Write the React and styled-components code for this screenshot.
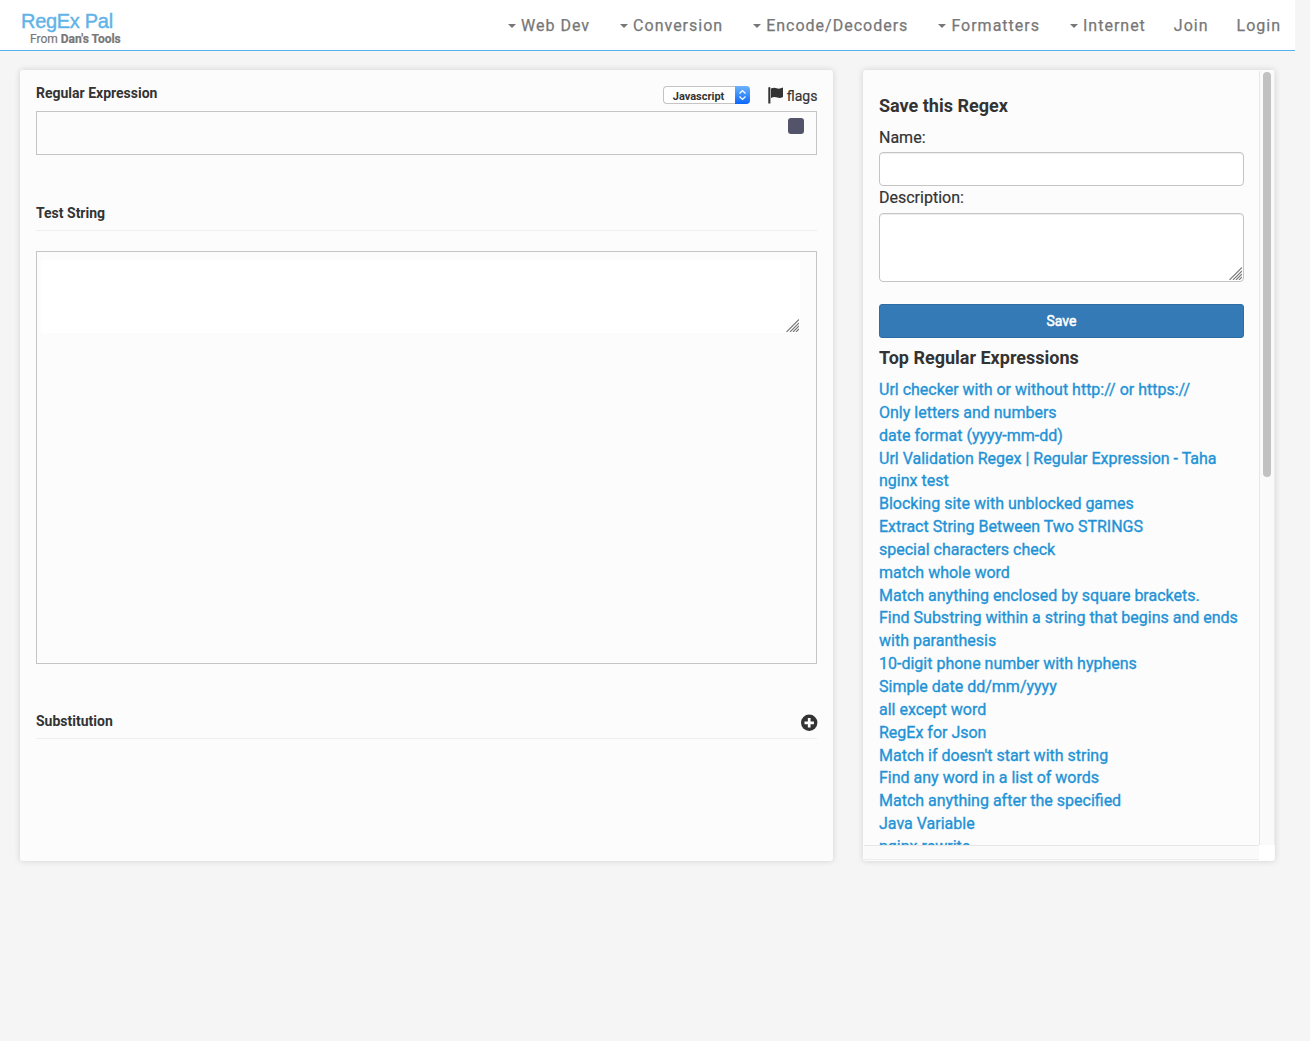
import styled, { createGlobalStyle } from 'styled-components';

const menus = [
  { name: 'Web Dev', caret: true },
  { name: 'Conversion', caret: true },
  { name: 'Encode/Decoders', caret: true },
  { name: 'Formatters', caret: true },
  { name: 'Internet', caret: true },
  { name: 'Join' },
  { name: 'Login' }
];

const expressions = [
  'Url checker with or without http:// or https://',
  'Only letters and numbers',
  'date format (yyyy-mm-dd)',
  'Url Validation Regex | Regular Expression - Taha',
  'nginx test',
  'Blocking site with unblocked games',
  'Extract String Between Two STRINGS',
  'special characters check',
  'match whole word',
  'Match anything enclosed by square brackets.',
  'Find Substring within a string that begins and ends with paranthesis',
  '10-digit phone number with hyphens',
  'Simple date dd/mm/yyyy',
  'all except word',
  'RegEx for Json',
  "Match if doesn't start with string",
  'Find any word in a list of words',
  'Match anything after the specified',
  'Java Variable',
  'nginx rewrite'
];

const ResizeGrip = () => (
  <StGrip viewBox="0 0 13 13">
    <path d="M0.5 13 13 0.5M4 13 13 4M7 13 13 7M10 13 13 10" stroke="#777" strokeWidth="1.1" />
  </StGrip>
);

const Header = () => {
  return (
    <StHeader>
      <StBrand>
        <StLogo>RegEx Pal</StLogo>
        <StFrom>
          From <b>Dan's Tools</b>
        </StFrom>
      </StBrand>
      <StNav>
        {menus.map((menu) => (
          <StNavItem key={menu.name} href="#">
            {menu.caret && <StCaret />}
            {menu.name}
          </StNavItem>
        ))}
      </StNav>
    </StHeader>
  );
};

const Editor = () => {
  return (
    <StEditor>
      <StEditorTop>
        <StLabel>Regular Expression</StLabel>
        <StOptions>
          <StSelect>
            <StSelectText>Javascript</StSelectText>
            <StSelectArrow>
              <svg width="9" height="12" viewBox="0 0 9 12" fill="none" stroke="#fff" strokeWidth="1.3">
                <path d="M1.5 4.4 4.5 1.6 7.5 4.4M1.5 7.6 4.5 10.4 7.5 7.6" />
              </svg>
            </StSelectArrow>
          </StSelect>
          <StFlags>
            <svg width="15" height="18" viewBox="0 0 15 18" fill="#333">
              <path d="M0.3 1.6Q1.3 0.4 2.4 1.6V17.6H0.3ZM3 2.5Q6 1 8.7 2.2Q11 3.4 15 1.5V10.9Q12 12.6 9.4 11.5Q6 10.1 3 12Z" />
            </svg>
            flags
          </StFlags>
        </StOptions>
      </StEditorTop>
      <StRegexBox>
        <StMarker />
      </StRegexBox>
      <StTestHead>
        <StLabel>Test String</StLabel>
      </StTestHead>
      <StTestBox>
        <StTestArea>
          <ResizeGrip />
        </StTestArea>
      </StTestBox>
      <StSubHead>
        <StLabel>Substitution</StLabel>
        <svg width="17" height="17" viewBox="0 0 17 17">
          <circle cx="8.2" cy="8.8" r="8.2" fill="#333" />
          <path d="M8.2 4.1v9.4M3.5 8.8h9.4" stroke="#fff" strokeWidth="2.7" />
        </svg>
      </StSubHead>
    </StEditor>
  );
};

const Sidebar = () => {
  return (
    <StSidebar>
      <StContent>
        <StTitle>Save this Regex</StTitle>
        <StFieldName>Name:</StFieldName>
        <StInput />
        <StFieldName $tall>Description:</StFieldName>
        <StDescription>
          <ResizeGrip />
        </StDescription>
        <StSave>Save</StSave>
        <StTopTitle>Top Regular Expressions</StTopTitle>
        <StList>
          {expressions.map((text) => (
            <li key={text}>
              <a href="#">{text}</a>
            </li>
          ))}
        </StList>
      </StContent>
      <StTrackY>
        <StThumb />
      </StTrackY>
      <StTrackX />
      <StCorner />
    </StSidebar>
  );
};

const App = () => {
  return (
    <>
      <GlobalStyle />
      <Header />
      <StMain>
        <Editor />
        <Sidebar />
      </StMain>
    </>
  );
};

const GlobalStyle = createGlobalStyle`
  * {
    box-sizing: border-box;
  }
  body {
    margin: 0;
    min-height: 1041px;
    background: #f5f5f5;
    color: #333;
    font-family: Roboto, sans-serif;
    font-size: 16px;
    line-height: 1.42857;
    overflow: hidden;
  }
  a {
    text-decoration: none;
  }
`;

const StHeader = styled.header`
  width: 1295px;
  height: 51px;
  display: flex;
  justify-content: space-between;
  padding-left: 21px;
  background: #fff;
  border-bottom: 1px solid #54b4eb;
`;

const StBrand = styled.div`
  display: flex;
  flex-direction: column;
  padding-top: 10px;
`;

const StLogo = styled.span`
  font-family: 'Liberation Sans', sans-serif;
  font-size: 20px;
  line-height: 22px;
  letter-spacing: -0.3px;
  color: #5fb3e6;
  -webkit-text-stroke: 0.4px #5fb3e6;
`;

const StFrom = styled.span`
  margin-left: 9px;
  font-size: 12px;
  line-height: 14px;
  color: #777;
  -webkit-text-stroke: 0.2px #777;
`;

const StNav = styled.nav`
  display: flex;
  align-items: center;
  padding-top: 2px;
`;

const StNavItem = styled.a`
  display: flex;
  align-items: center;
  padding: 0 14px;
  font-size: 16px;
  letter-spacing: 1px;
  color: #777;
  -webkit-text-stroke: 0.25px #777;
`;

const StCaret = styled.i`
  margin: 0 5px 0 2px;
  border-top: 4px solid;
  border-left: 4px solid transparent;
  border-right: 4px solid transparent;
`;

const StMain = styled.main`
  display: flex;
  gap: 30px;
  padding: 19px 20px 0;
`;

const StCard = styled.section`
  height: 791px;
  background: #fcfcfc;
  border-radius: 3px;
  box-shadow: 0 0 6px rgba(0, 0, 0, 0.15);
`;

const StEditor = styled(StCard)`
  width: 813px;
  padding: 13px 16px 0;
`;

const StEditorTop = styled.div`
  height: 28px;
  display: flex;
  justify-content: space-between;
`;

const StLabel = styled.span`
  font-size: 14px;
  font-weight: 700;
  line-height: 20px;
`;

const StOptions = styled.div`
  display: flex;
  align-items: flex-start;
  gap: 18px;
  padding-top: 3px;
`;

const StSelect = styled.div`
  width: 87px;
  height: 18px;
  display: flex;
  justify-content: space-between;
  border: 1px solid #c4c4c4;
  border-right: 0;
  border-radius: 4px;
  background: #fff;
`;

const StSelectText = styled.span`
  padding-left: 9px;
  font-size: 11px;
  font-weight: 700;
  line-height: 19px;
`;

const StSelectArrow = styled.span`
  width: 15px;
  height: 18px;
  margin-top: -1px;
  display: flex;
  align-items: center;
  justify-content: center;
  border-radius: 0 4px 4px 0;
  background: linear-gradient(#6cb3fa, #0a67fb);
`;

const StFlags = styled.span`
  display: flex;
  gap: 4px;
  margin-right: -0.4px;
  font-size: 14px;
  line-height: 20px;
  -webkit-text-stroke: 0.2px #333;
`;

const StRegexBox = styled.div`
  height: 44px;
  display: flex;
  justify-content: flex-end;
  padding: 6px 12px;
  border: 1px solid #c4c4c4;
`;

const StMarker = styled.i`
  width: 16px;
  height: 16px;
  border-radius: 3px;
  background: #535369;
`;

const StTestHead = styled.div`
  height: 29px;
  margin-top: 47px;
  border-bottom: 1px solid #eee;
`;

const StTestBox = styled.div`
  height: 413px;
  margin-top: 20px;
  padding: 8px 16px 0 4px;
  border: 1px solid #c4c4c4;
`;

const StTestArea = styled.div`
  height: 73px;
  display: flex;
  align-items: flex-end;
  justify-content: flex-end;
  padding: 1px;
  background: #fff;
`;

const StGrip = styled.svg`
  width: 13px;
  height: 13px;
`;

const StSubHead = styled.div`
  height: 28px;
  display: flex;
  justify-content: space-between;
  align-items: flex-start;
  margin-top: 47px;
  border-bottom: 1px solid #eee;

  svg {
    margin: 3px -1px 0 0;
  }
`;

const StSidebar = styled(StCard)`
  width: 412px;
  display: grid;
  grid-template-columns: 396px 16px;
  grid-template-rows: 775px 16px;
  overflow: hidden;
`;

const StContent = styled.div`
  padding: 26px 15px 0 16px;
  overflow: hidden;
`;

const StTitle = styled.h4`
  margin: 0 0 10px;
  font-size: 18px;
  font-weight: 700;
  line-height: 20px;
`;

const StFieldName = styled.div`
  height: ${(props) => (props.$tall ? 27 : 26)}px;
  line-height: 23px;
  -webkit-text-stroke: 0.2px #333;
`;

const StInput = styled.input`
  display: block;
  width: 100%;
  height: 34px;
  background: #fff;
  border: 1px solid #c4c4c4;
  border-radius: 4px;
  box-shadow: inset 0 1px 1px rgba(0, 0, 0, 0.075);
`;

const StDescription = styled.div`
  height: 69px;
  display: flex;
  align-items: flex-end;
  justify-content: flex-end;
  padding: 1px;
  background: #fff;
  border: 1px solid #c4c4c4;
  border-radius: 4px;
  box-shadow: inset 0 1px 1px rgba(0, 0, 0, 0.075);
`;

const StSave = styled.button`
  width: 100%;
  height: 34px;
  display: block;
  margin-top: 22px;
  background: #337ab7;
  border: 1px solid #2e6da4;
  border-radius: 3px;
  color: #fff;
  font-family: inherit;
  font-size: 14px;
  -webkit-text-stroke: 0.5px #fff;
`;

const StTopTitle = styled(StTitle)`
  margin: 10px 0 11.05px;
`;

const StList = styled.ul`
  margin: 0;
  padding: 0;
  list-style: none;

  a {
    color: #1f93d6;
    -webkit-text-stroke: 0.35px #1f93d6;
  }
`;

const StTrackY = styled.div`
  margin-top: 1px;
  padding: 1px 3px 0;
  background: #fafafa;
  border-left: 1px solid #e7e7e7;
  border-right: 1px solid #ededed;
`;

const StThumb = styled.div`
  width: 8px;
  height: 405px;
  border-radius: 4px;
  background: #c1c1c1;
`;

const StTrackX = styled.div`
  margin-left: 1px;
  height: 15px;
  background: #fafafa;
  border-top: 1px solid #e7e7e7;
  border-bottom: 1px solid #ededed;
`;

const StCorner = styled.div`
  width: 15px;
  height: 15px;
  background: #fff;
`;

export default App;
